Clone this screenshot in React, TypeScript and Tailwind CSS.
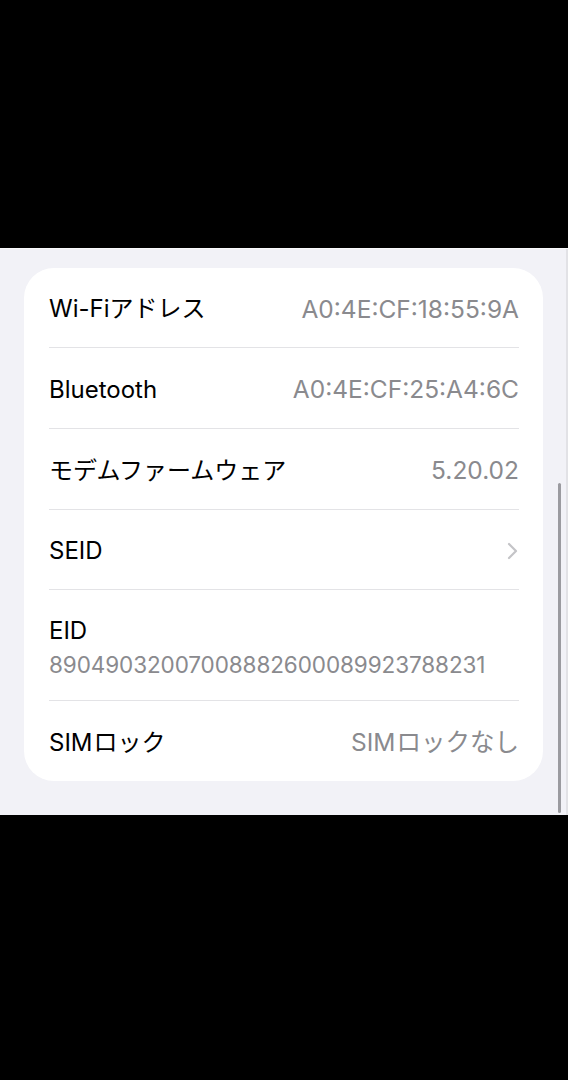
const label = "text-[24px] text-black"
const value = "text-[24.5px] text-[#8a8a8e]"

type Row = { name: string; value?: string; chevron?: boolean; h: string }

const rows: Row[] = [
  { name: "Wi-Fiアドレス", value: "A0:4E:CF:18:55:9A", h: "h-[80px]" },
  { name: "Bluetooth", value: "A0:4E:CF:25:A4:6C", h: "h-[81px]" },
  { name: "モデムファームウェア", value: "5.20.02", h: "h-[81px]" },
  { name: "SEID", chevron: true, h: "h-[80px]" },
]

const Chevron = () => (
  <svg width="11" height="18" viewBox="0 0 11 18" fill="none" className="mr-[1px]">
    <path d="M2 2l7 7-7 7" stroke="#c4c4c7" strokeWidth="2.2" strokeLinecap="round" strokeLinejoin="round" />
  </svg>
)

export default function App() {
  return (
    <div
      className="flex h-[1080px] w-[568px] flex-col bg-black"
      style={{ fontFamily: 'Inter, "Noto Sans CJK JP", sans-serif' }}
    >
      <div className="h-[248px] shrink-0" />

      <div className="relative h-[567px] shrink-0 border-t border-[#fafafc] bg-[#f2f2f7] pt-[19px] pr-[25px] pl-[24px]">
        <div className="rounded-[30px] bg-white pr-[24px] pl-[25px]">
          {rows.map((r) => (
            <div
              key={r.name}
              className={`flex items-center justify-between border-b border-[#e3e3e6] pt-[3px] ${r.h}`}
            >
              <span className={label}>{r.name}</span>
              {r.value && <span className={value}>{r.value}</span>}
              {r.chevron && <Chevron />}
            </div>
          ))}

          <div className="flex h-[111px] flex-col justify-center gap-[3px] border-b border-[#e3e3e6] pt-[5px]">
            <span className={`${label} leading-[32px]`}>EID</span>
            <span className="text-[22.5px] leading-[30px] tracking-[-0.1px] text-[#8a8a8e]">
              89049032007008882600089923788231
            </span>
          </div>

          <div className="flex h-[80px] items-center justify-between pt-[3px]">
            <span className={label}>
              SIM<span className="ml-[1px]">ロック</span>
            </span>
            <span className={value}>
              SIM<span className="ml-[1px]">ロックなし</span>
            </span>
          </div>
        </div>

        <div className="absolute top-[234px] right-[7px] h-[330px] w-[3px] rounded-full bg-[#9b9ba0]" />
        <div className="absolute top-0 right-0 h-full w-[2px] bg-[#e2e2e6]" />
      </div>

      <div className="flex-1" />
    </div>
  )
}
